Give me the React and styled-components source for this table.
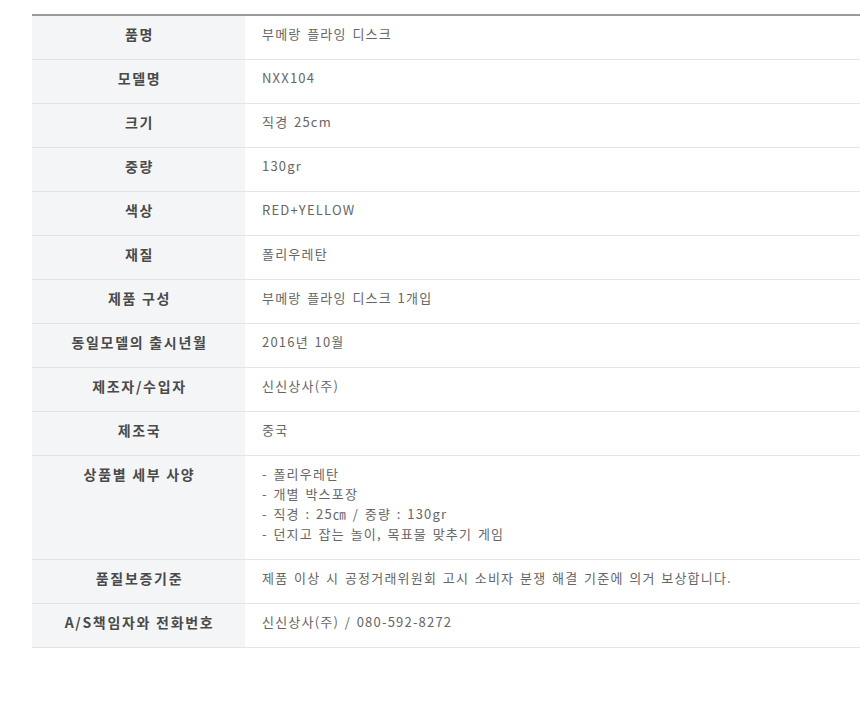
import React from "react";
import styled, { createGlobalStyle } from "styled-components";

const Global = createGlobalStyle`
  html, body { margin: 0; padding: 0; background: #fff; overflow-x: hidden; }
  body { font-family: "Noto Sans CJK KR", "Noto Sans", sans-serif; }
`;

const Page = styled.div`
  padding: 14px 0 0 32px;
`;

const Table = styled.div`
  display: grid;
  grid-template-columns: 213px 1fr;
  border-top: 2px solid #9a9a9a;
`;

const Head = styled.div`
  background: #f4f5f6;
  border-bottom: 1px solid #e3e3e3;
  padding: 8px 0 15px 2px;
  line-height: 20px;
  font-size: 14px;
  font-weight: 700;
  color: #4a4a4a;
  text-align: center;
  letter-spacing: 1.7px;
`;

const Cell = styled.div`
  border-bottom: 1px solid #e3e3e3;
  padding: 8px 0 15px 17px;
  line-height: 20px;
  font-size: 13px;
  color: #666;
  letter-spacing: 1.2px;
  word-spacing: 1.6px;
  white-space: pre-line;
`;

const rows = [
  ["품명", "부메랑 플라잉 디스크"],
  ["모델명", "NXX104"],
  ["크기", "직경 25cm"],
  ["중량", "130gr"],
  ["색상", "RED+YELLOW"],
  ["재질", "폴리우레탄"],
  ["제품 구성", "부메랑 플라잉 디스크 1개입"],
  ["동일모델의 출시년월", "2016년 10월"],
  ["제조자/수입자", "신신상사(주)"],
  ["제조국", "중국"],
  [
    "상품별 세부 사양",
    "- 폴리우레탄\n- 개별 박스포장\n- 직경 : 25㎝ / 중량 : 130gr\n- 던지고 잡는 놀이, 목표물 맞추기 게임",
  ],
  ["품질보증기준", "제품 이상 시 공정거래위원회 고시 소비자 분쟁 해결 기준에 의거 보상합니다."],
  ["A/S책임자와 전화번호", "신신상사(주) / 080-592-8272"],
];

export default function App() {
  return (
    <Page>
      <Global />
      <Table>
        {rows.map(([h, v]) => (
          <React.Fragment key={h}>
            <Head>{h}</Head>
            <Cell>{v}</Cell>
          </React.Fragment>
        ))}
      </Table>
    </Page>
  );
}
